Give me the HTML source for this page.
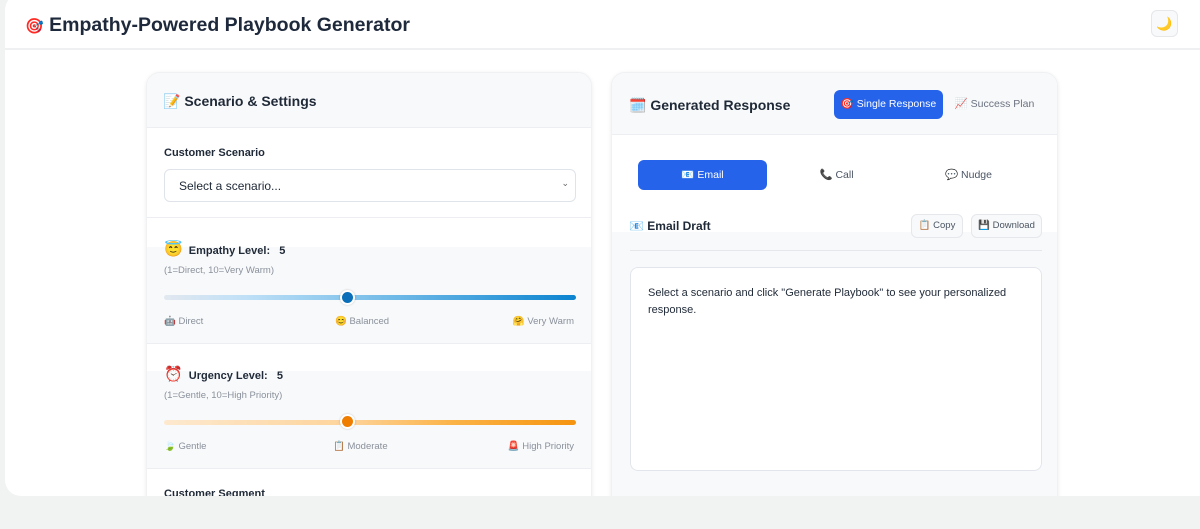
<!DOCTYPE html>
<html><head><meta charset="utf-8"><style>
*{box-sizing:border-box;margin:0;padding:0}
body{width:1200px;height:529px;overflow:hidden;background:#f0f3f1;font-family:"Liberation Sans","Noto Sans CJK SC",sans-serif;color:#1f2937;position:relative}
.wrap{position:absolute;left:5px;top:-6px;width:1210px;height:502px;background:#fff;border-radius:16px;overflow:hidden}
.hdr{position:absolute;left:0;top:0;width:100%;height:56px;border-bottom:2px solid #eef0f2}
.abs{position:absolute}
.card{position:absolute;top:72px;border-radius:14px;background:#fff;box-shadow:0 1px 4px rgba(0,0,0,.08);overflow:hidden;border:1px solid #f0f1f3}
.gray{background:#f8f9fa}
.lbl{font-size:12px;font-weight:bold;color:#1f2937}
.sm{font-size:9.5px;color:#8a919c}
.track{position:absolute;left:17px;width:412px;height:5px;border-radius:3px}
.thumb{position:absolute;width:15px;height:15px;border-radius:50%;border:2px solid #fff;box-shadow:0 0 2px rgba(0,0,0,.2)}
.btn{position:absolute;border-radius:6px;font-size:10.5px;text-align:center}
</style></head><body>
<div class="wrap">
 <div class="hdr"></div>
 <div class="abs" style="left:20px;top:20px;font-size:19.5px;font-weight:bold;color:#1e293b"><span style="font-size:15px">🎯</span> Empathy-Powered Playbook Generator</div>
 <div class="abs" style="left:1146px;top:16px;width:27px;height:27px;border:1px solid #e5e7eb;border-radius:6px;background:#f8f9fa;font-size:13px;text-align:center;line-height:26px;color:#f59e0b">🌙</div>
</div>

<div class="card" style="left:146px;width:446px;height:440px">
 <div class="abs gray" style="left:0;top:0;width:100%;height:55px;border-bottom:1px solid #eceef1"></div>
 <div class="abs" style="left:16px;top:20px;font-size:14px;font-weight:bold">📝 Scenario &amp; Settings</div>
 <div class="abs lbl" style="left:17px;top:74px;font-size:11px">Customer Scenario</div>
 <div class="abs" style="left:17px;top:96px;width:412px;height:33px;border:1px solid #dfe3ea;border-radius:6px;font-size:12px;padding:9px 14px;color:#1f2937">Select a scenario...<span style="position:absolute;right:6px;top:8px;font-size:9px;color:#666">⌄</span></div>
 <div class="abs" style="left:0;top:144px;width:100%;height:1px;background:#eceef1"></div>
 <div class="abs gray" style="left:0;top:174px;width:100%;height:97px;border-bottom:1px solid #eceef1"></div>
 <div class="abs lbl" style="left:17px;top:167px;font-size:11px"><span style="font-size:15px">😇</span>&nbsp;&nbsp;Empathy Level:&nbsp;&nbsp; 5</div>
 <div class="abs sm" style="left:17px;top:192px">(1=Direct, 10=Very Warm)</div>
 <div class="track" style="top:222px;background:linear-gradient(90deg,#e2e8f0,#bfe0f7 20%,#7cc0ea 50%,#0b84d0)"></div>
 <div class="thumb" style="left:193px;top:217px;background:#0a6fb8"></div>
 <div class="abs sm" style="left:17px;top:243px">🤖 Direct</div>
 <div class="abs sm" style="left:188px;top:243px">😊 Balanced</div>
 <div class="abs sm" style="right:17px;top:243px">🤗 Very Warm</div>
 <div class="abs gray" style="left:0;top:298px;width:100%;height:98px;border-bottom:1px solid #eceef1"></div>
 <div class="abs lbl" style="left:17px;top:292px;font-size:11px"><span style="font-size:15px">⏰</span>&nbsp;&nbsp;Urgency Level:&nbsp;&nbsp; 5</div>
 <div class="abs sm" style="left:17px;top:317px">(1=Gentle, 10=High Priority)</div>
 <div class="track" style="top:347px;background:linear-gradient(90deg,#fde9cf,#fdd39a 45%,#fbb347 70%,#f59410)"></div>
 <div class="thumb" style="left:193px;top:341px;background:#ef7d00"></div>
 <div class="abs sm" style="left:17px;top:368px">🍃 Gentle</div>
 <div class="abs sm" style="left:186px;top:368px">📋 Moderate</div>
 <div class="abs sm" style="right:17px;top:368px">🚨 High Priority</div>
 <div class="abs lbl" style="left:17px;top:415px;font-size:11px">Customer Segment</div>
</div>

<div class="card" style="left:611px;width:447px;height:440px">
 <div class="abs gray" style="left:0;top:0;width:100%;height:62px;border-bottom:1px solid #eceef1"></div>
 <div class="abs" style="left:17px;top:24px;font-size:14px;font-weight:bold">🗓️ Generated Response</div>
 <div class="btn" style="left:222px;top:17px;width:109px;height:29px;background:#2563eb;color:#fff;line-height:29px">🎯 Single Response</div>
 <div class="btn" style="left:340px;top:17px;width:85px;height:29px;color:#6b7280;line-height:29px">📈 Success Plan</div>
 <div class="btn" style="left:26px;top:87px;width:129px;height:30px;background:#2563eb;color:#fff;line-height:30px">📧 Email</div>
 <div class="btn" style="left:160px;top:87px;width:129px;height:30px;color:#4b5563;line-height:30px">📞 Call</div>
 <div class="btn" style="left:292px;top:87px;width:129px;height:30px;color:#4b5563;line-height:30px">💬 Nudge</div>
 <div class="abs gray" style="left:0;top:159px;width:100%;height:290px"></div>
 <div class="abs" style="left:17px;top:146px;font-size:12px;font-weight:bold">📧 Email Draft</div>
 <div class="btn" style="left:299px;top:141px;width:52px;height:24px;border:1px solid #e5e7eb;background:#f8f9fa;color:#4b5563;line-height:22px;font-size:9.5px">📋 Copy</div>
 <div class="btn" style="left:359px;top:141px;width:71px;height:24px;border:1px solid #e5e7eb;background:#f8f9fa;color:#4b5563;line-height:22px;font-size:9.5px">💾 Download</div>
 <div class="abs" style="left:18px;top:177px;width:412px;height:1px;background:#e5e7eb"></div>
 <div class="abs" style="left:18px;top:194px;width:412px;height:204px;background:#fff;border:1px solid #e2e6ec;border-radius:8px;padding:17px 17px;font-size:11px;line-height:17px;color:#1f2937">Select a scenario and click "Generate Playbook" to see your personalized response.</div>
</div>
<div class="abs" style="left:0;top:496px;width:1200px;height:33px;background:#f0f3f1"></div>
</body></html>
